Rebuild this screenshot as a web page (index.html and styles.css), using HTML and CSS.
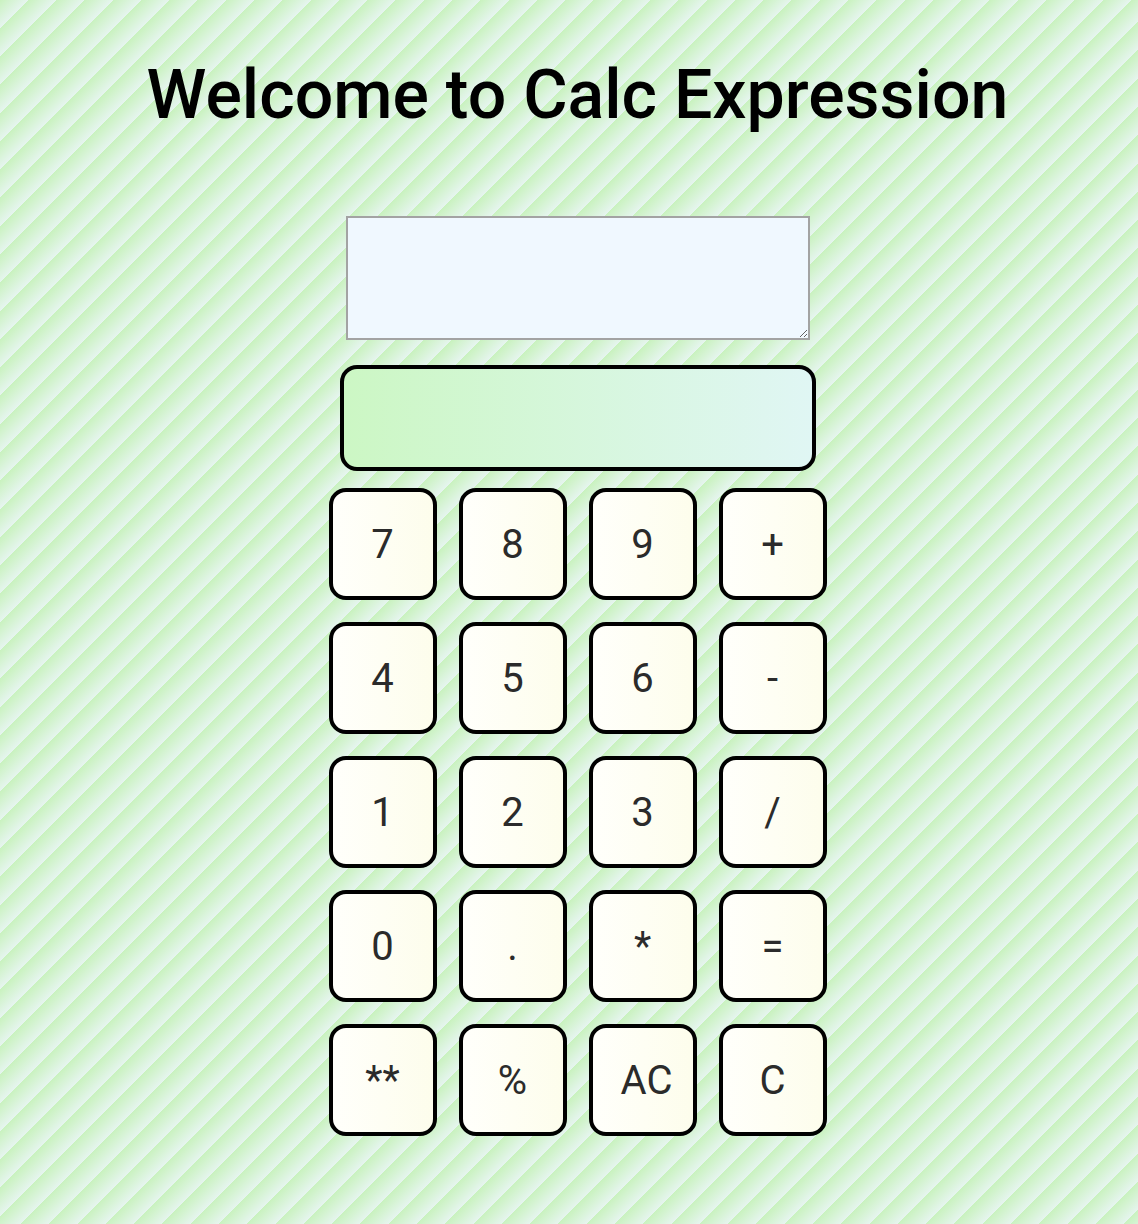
FILE: index.html
```html
<!DOCTYPE html>
<html lang="en">
<head>
<meta charset="utf-8">
<title>Calc Expression</title>
<link rel="stylesheet" href="styles.css">
</head>
<body>
<div class="page">
  <h1 class="title">Welcome to Calc Expression</h1>
  <div class="calc">
    <textarea class="expr"></textarea>
    <div class="result"></div>
    <div class="keys">
      <button class="key">7</button>
      <button class="key">8</button>
      <button class="key">9</button>
      <button class="key">+</button>
      <button class="key">4</button>
      <button class="key">5</button>
      <button class="key">6</button>
      <button class="key">-</button>
      <button class="key">1</button>
      <button class="key">2</button>
      <button class="key">3</button>
      <button class="key">/</button>
      <button class="key">0</button>
      <button class="key">.</button>
      <button class="key">*</button>
      <button class="key">=</button>
      <button class="key">**</button>
      <button class="key">%</button>
      <button class="key key-wide">AC</button>
      <button class="key">C</button>
    </div>
  </div>
</div>
</body>
</html>
```

FILE: styles.css
```css
html, body {
  margin: 0;
  padding: 0;
}
body {
  min-height: 1224px;
  background: repeating-linear-gradient(135deg, #c9f2bf 0px, #e6f5ef 20px);
  font-family: Roboto, "Liberation Sans", sans-serif;
}
.page {
  padding: 55px 0 0 17px;
  display: flex;
  flex-direction: column;
  align-items: center;
}
.title {
  margin: 0;
  font-family: Roboto, sans-serif;
  font-weight: 500;
  font-size: 68px;
  line-height: 80px;
  color: #000;
}
.calc {
  margin-top: 81px;
  display: flex;
  flex-direction: column;
  align-items: center;
}
.expr {
  box-sizing: border-box;
  width: 464px;
  height: 124px;
  margin: 0;
  border: 2px solid #a3a3a3;
  background: #f0f8ff;
  display: block;
}
.result {
  box-sizing: border-box;
  margin-top: 25px;
  width: 476px;
  height: 106px;
  border: 4px solid #000;
  border-radius: 17px;
  background: linear-gradient(to right, #ccf7c4, #e0f6f4);
}
.keys {
  margin-top: 17px;
  display: grid;
  grid-template-columns: repeat(4, 108px);
  grid-auto-rows: 112px;
  column-gap: 22px;
  row-gap: 22px;
}
.key {
  box-sizing: border-box;
  margin: 0;
  padding: 0;
  border: 4px solid #000;
  border-radius: 17px;
  background: linear-gradient(to right, #fffffb, #fdfdec);
  color: #2b2b2b;
  font-family: Roboto, sans-serif;
  font-size: 40px;
  font-weight: 400;
}
.key-wide {
  padding-left: 8px;
}
```
